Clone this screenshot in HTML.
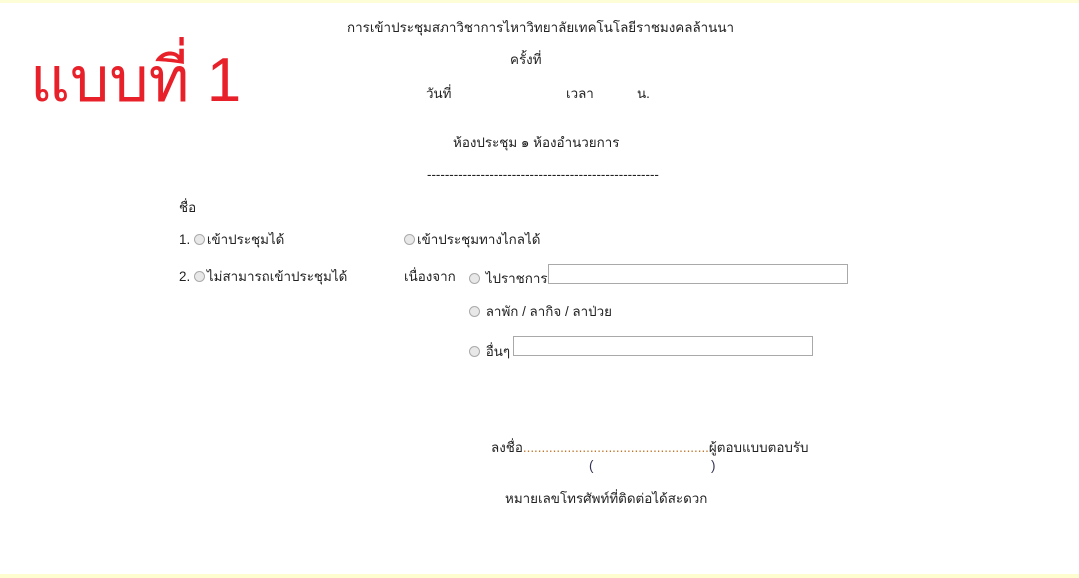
<!DOCTYPE html>
<html><head><meta charset="utf-8"><style>
body{margin:0;width:1079px;height:578px;background:#fff;position:relative;overflow:hidden;font-family:"Liberation Sans",sans-serif;font-size:13.4px;color:#222}
.t{position:absolute;white-space:nowrap;line-height:16px}
.r{display:inline-block;width:9px;height:9px;border:1px solid #aaa;border-radius:50%;background:#e8e8e8;vertical-align:-1px;margin-right:2px}
.ta{position:absolute;border:1px solid #a9a9a9;background:#fff;height:18px}
</style></head><body>
<div style="position:absolute;left:0;top:0;width:1079px;height:3px;background:#fdfdd8"></div>
<div style="position:absolute;left:0;bottom:0;width:1079px;height:4px;background:#fdfdd0"></div>
<div class="t" style="left:30px;top:48px;font-size:62px;line-height:66px;color:#e8202a">แบบที่ 1</div>
<div class="t" style="left:347px;top:20px">การเข้าประชุมสภาวิชาการไหาวิทยาลัยเทคโนโลยีราชมงคลล้านนา</div>
<div class="t" style="left:510px;top:52px">ครั้งที่</div>
<div class="t" style="left:426px;top:86px">วันที่</div>
<div class="t" style="left:566px;top:86px">เวลา</div>
<div class="t" style="left:637px;top:86px">น.</div>
<div class="t" style="left:453px;top:135px">ห้องประชุม ๑ ห้องอำนวยการ</div>
<div class="t" style="left:427px;top:167px">----------------------------------------------------</div>
<div class="t" style="left:179px;top:200px">ชื่อ</div>
<div class="t" style="left:179px;top:232px">1. <span class="r"></span>เข้าประชุมได้</div>
<div class="t" style="left:404px;top:232px"><span class="r"></span>เข้าประชุมทางไกลได้</div>
<div class="t" style="left:179px;top:269px">2. <span class="r"></span>ไม่สามารถเข้าประชุมได้</div>
<div class="t" style="left:404px;top:269px">เนื่องจาก</div>
<div class="t" style="left:469px;top:271px"><span class="r"></span> ไปราชการ</div>
<div class="ta" style="left:548px;top:264px;width:298px"></div>
<div class="t" style="left:469px;top:304px"><span class="r"></span> ลาพัก / ลากิจ / ลาป่วย</div>
<div class="t" style="left:469px;top:344px"><span class="r"></span> อื่นๆ</div>
<div class="ta" style="left:513px;top:336px;width:298px"></div>
<div class="t" style="left:491px;top:440px">ลงชื่อ<span style="color:#c0762a">..................................................</span>ผู้ตอบแบบตอบรับ</div>
<div class="t" style="left:589px;top:458px;color:#335">(</div>
<div class="t" style="left:711px;top:458px;color:#335">)</div>
<div class="t" style="left:505px;top:491px">หมายเลขโทรศัพท์ที่ติดต่อได้สะดวก</div>
</body></html>
